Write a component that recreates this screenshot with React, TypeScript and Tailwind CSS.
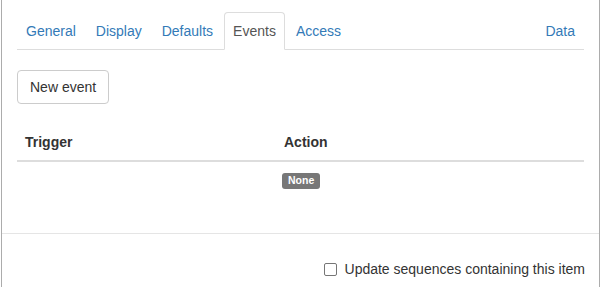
import React from "react";

const tabs = ["General", "Display", "Defaults", "Events", "Access"];

export default function App() {
  return (
    <div
      className="w-[602px] h-[287px] bg-white overflow-hidden text-[14px] leading-[20px] text-[#333]"
      style={{ fontFamily: '"Liberation Sans", Arial, sans-serif' }}
    >
      <div className="ml-px w-[599px] h-[287px] border-x border-[#acacac] flex flex-col">
        <div className="pt-[12px] px-[15px] pb-[15px]">
          <ul className="flex border-b border-[#ddd] h-[38px]">
            {tabs.map((t) => (
              <li key={t} className="mr-[2px] -mb-px">
                {t === "Events" ? (
                  <span className="block px-[8px] py-[8px] border border-[#ddd] border-b-transparent bg-white rounded-t-[4px] text-[#555]">
                    {t}
                  </span>
                ) : (
                  <span className="block px-[8px] py-[8px] border border-transparent text-[#337ab7]">
                    {t}
                  </span>
                )}
              </li>
            ))}
            <li className="ml-auto -mb-px">
              <span className="block px-[8px] py-[8px] border border-transparent text-[#337ab7]">
                Data
              </span>
            </li>
          </ul>
          <div className="mt-[20px]">
            <button className="h-[34px] px-[12px] border border-[#ccc] rounded-[4px] bg-white text-[#333] text-[14px] leading-[20px]">
              New event
            </button>
          </div>
          <table className="mt-[20px] mb-[20px] w-full border-collapse">
            <thead>
              <tr>
                <th className="w-[259px] text-left font-bold px-[8px] py-[8px] border-b-2 border-[#ddd]">
                  Trigger
                </th>
                <th className="text-left font-bold px-[8px] py-[8px] border-b-2 border-[#ddd]">
                  Action
                </th>
              </tr>
            </thead>
            <tbody>
              <tr>
                <td className="px-[8px] py-[8px] h-[36px]"></td>
                <td className="pl-[6px] pr-[8px] py-[8px] h-[36px]">
                  <span className="inline-block bg-[#777] text-white font-bold text-[10.5px] leading-[11px] px-[6px] pt-[2px] pb-[3px] rounded-[3px] align-[1px]">
                    None
                  </span>
                </td>
              </tr>
            </tbody>
          </table>
        </div>
        <div className="border-t border-[#e5e5e5] pl-[15px] pr-[14px] pt-[25px] flex justify-end">
          <label className="flex items-center h-[20px]">
            <span className="w-[13px] h-[13px] border border-[#767676] rounded-[2px] mr-[8px] mt-px"></span>
            <span>Update sequences containing this item</span>
          </label>
        </div>
      </div>
    </div>
  );
}
